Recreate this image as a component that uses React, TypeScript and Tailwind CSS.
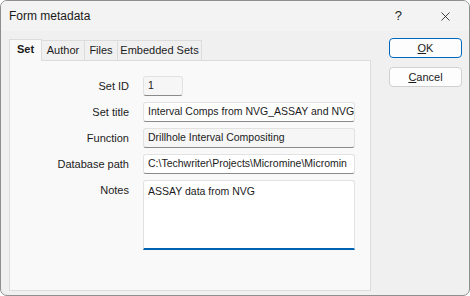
import { X } from 'lucide-react';

const fields = [
  { label: 'Set ID', value: '1', width: 'w-[40px]', grey: true },
  { label: 'Set title', value: 'Interval Comps from NVG_ASSAY and NVG', width: 'w-[212px]', grey: false },
  { label: 'Function', value: 'Drillhole Interval Compositing', width: 'w-[212px]', grey: true },
  { label: 'Database path', value: 'C:\\Techwriter\\Projects\\Micromine\\Micromin', width: 'w-[212px]', grey: false },
];

const tabs = [
  { label: 'Author', width: 'w-[43px]' },
  { label: 'Files', width: 'w-[33px]' },
  { label: 'Embedded Sets', width: 'w-[84px]' },
];

export default function App() {
  return (
    <div
      className="w-[470px] h-[296px] bg-[#f0f0f0] text-[#1b1b1b] text-[11px] border border-[#8f8f8f] rounded-[7px] overflow-hidden flex flex-col"
      style={{ fontFamily: '"Liberation Sans", Arial, sans-serif' }}
    >
      {/* Title bar */}
      <div className="h-[30px] shrink-0 flex items-center bg-[#f3f3f3]">
        <span className="pl-[8px] text-[12px] text-[#1a1a1a]">Form metadata</span>
        <span className="ml-auto mr-[36px] text-[13px]">?</span>
        <X className="w-[15px] h-[15px] mr-[16px]" strokeWidth={1.3} />
      </div>

      {/* Body */}
      <div className="flex flex-1 pt-[7px]">
        <div className="ml-[8px] w-[362px] flex flex-col">
          {/* Tabs */}
          <div className="flex items-end h-[22px]">
            <div className="h-[22px] w-[33px] flex items-center justify-center bg-[#f9f9f9] border border-b-0 border-[#dcdcdc] font-bold relative z-10 -mb-px pb-[2px]">
              Set
            </div>
            {tabs.map((t) => (
              <div
                key={t.label}
                className={`${t.width} h-[20px] flex items-center justify-center whitespace-nowrap bg-[#f0f0f0] border border-l-0 border-b-0 border-[#dcdcdc]`}
              >
                {t.label}
              </div>
            ))}
          </div>
          {/* Panel */}
          <div className="h-[231px] bg-[#f9f9f9] border border-[#dcdcdc] pt-[15px]">
            <div className="grid grid-cols-[119px_1fr] gap-x-[14px] gap-y-[6px]">
              {fields.map((f) => (
                <div key={f.label} className="contents">
                  <div className="h-[20px] flex items-center justify-end">{f.label}</div>
                  <div
                    className={`${f.width} h-[20px] flex items-center px-[4px] text-[10.5px] rounded-[3px] border border-[#e2e2e2] border-b-[#8a8a8a] overflow-hidden whitespace-nowrap ${f.grey ? 'bg-[#f6f6f6]' : 'bg-white'}`}
                  >
                    {f.value}
                  </div>
                </div>
              ))}
              <div className="h-[20px] flex items-center justify-end">Notes</div>
              <div className="w-[212px] h-[70px] px-[4px] pt-[3px] text-[10.5px] bg-white border border-[#e2e2e2] border-b-2 border-b-[#0063b1] rounded-t-[3px]">
                ASSAY data from NVG
              </div>
            </div>
          </div>
        </div>

        {/* Buttons */}
        <div className="ml-[18px] flex flex-col gap-[9px]">
          <button className="w-[73px] h-[20px] rounded-[4px] border border-[#0067c0] bg-[#fdfdfd] flex items-center justify-center text-[11px]">
            <span>
              <span className="underline">O</span>K
            </span>
          </button>
          <button className="w-[73px] h-[20px] rounded-[4px] border border-[#d0d0d0] bg-[#fdfdfd] flex items-center justify-center text-[11px]">
            <span>
              <span className="underline">C</span>ancel
            </span>
          </button>
        </div>
      </div>
    </div>
  );
}
